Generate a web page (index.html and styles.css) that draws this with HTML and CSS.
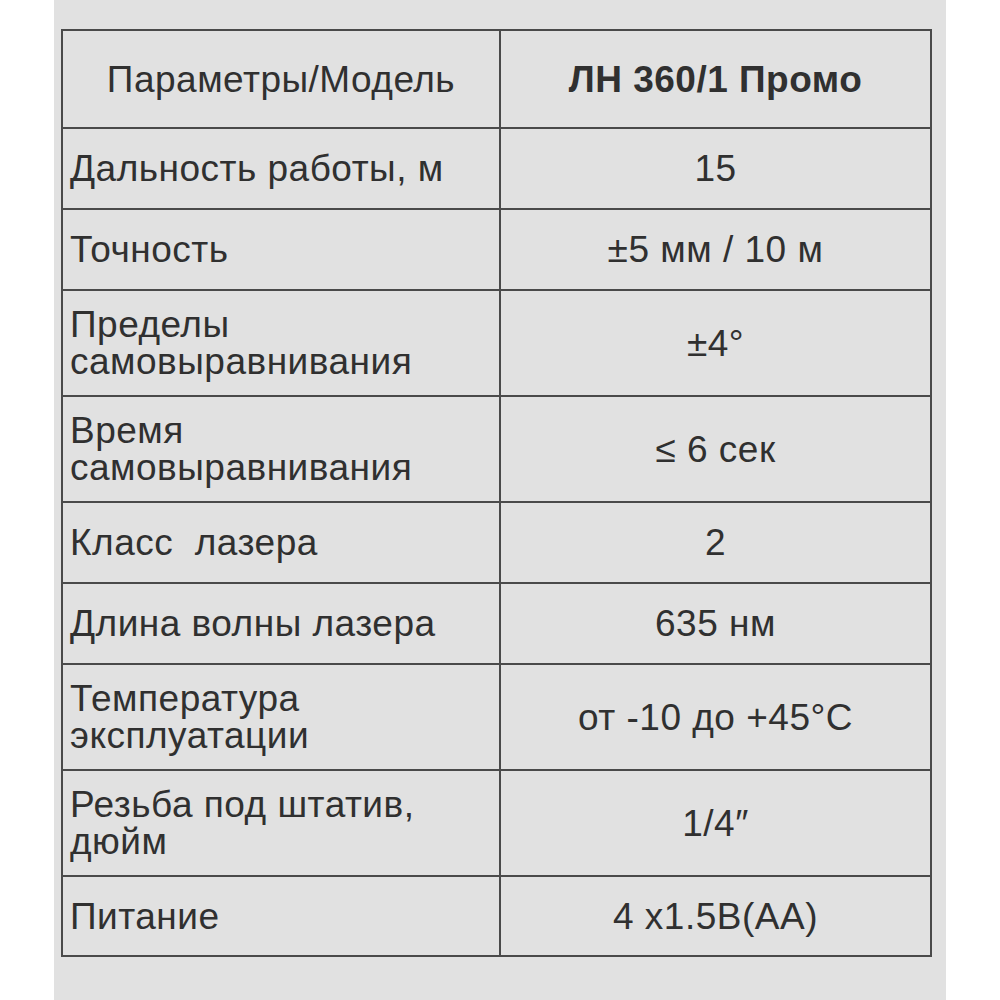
FILE: index.html
```html
<!DOCTYPE html>
<html lang="ru">
<head>
<meta charset="utf-8">
<link rel="stylesheet" href="styles.css">
</head>
<body>
<div class="sheet">
  <table class="spec">
    <tr class="r-head">
      <td class="c-head">Параметры/Модель</td>
      <td class="c-val c-model">ЛН 360/1 Промо</td>
    </tr>
    <tr class="r-single">
      <td class="c-name">Дальность работы, м</td>
      <td class="c-val">15</td>
    </tr>
    <tr class="r-single">
      <td class="c-name">Точность</td>
      <td class="c-val">±5 мм / 10 м</td>
    </tr>
    <tr class="r-double">
      <td class="c-name">Пределы<br>самовыравнивания</td>
      <td class="c-val">±4°</td>
    </tr>
    <tr class="r-double">
      <td class="c-name">Время<br>самовыравнивания</td>
      <td class="c-val">≤ 6 сек</td>
    </tr>
    <tr class="r-single">
      <td class="c-name">Класс&nbsp; лазера</td>
      <td class="c-val">2</td>
    </tr>
    <tr class="r-single">
      <td class="c-name">Длина волны лазера</td>
      <td class="c-val">635 нм</td>
    </tr>
    <tr class="r-double">
      <td class="c-name">Температура<br>эксплуатации</td>
      <td class="c-val">от -10 до +45°C</td>
    </tr>
    <tr class="r-double">
      <td class="c-name">Резьба под штатив,<br>дюйм</td>
      <td class="c-val">1/4″</td>
    </tr>
    <tr class="r-last">
      <td class="c-name">Питание</td>
      <td class="c-val">4 x1.5B(AA)</td>
    </tr>
  </table>
</div>
</body>
</html>
```

FILE: styles.css
```css
html, body {
  margin: 0;
  padding: 0;
  background: #ffffff;
}
.sheet {
  margin-left: 54px;
  width: 892px;
  height: 1000px;
  background: #e1e1e1;
  padding: 29px 0 0 7px;
  box-sizing: border-box;
  font-family: "Liberation Sans", Arial, sans-serif;
  color: #303030;
}
.spec {
  border-collapse: collapse;
  width: 871px;
  table-layout: fixed;
}
.spec td {
  border: 2px solid #4a4a4a;
  font-size: 37px;
  line-height: 37px;
  letter-spacing: 0.5px;
  vertical-align: middle;
  padding: 0 0 0 7px;
  white-space: nowrap;
}
.spec td:first-child {
  width: 436px;
}
.spec .c-head {
  text-align: center;
  padding: 0;
}
.spec .c-val {
  text-align: center;
  padding: 0;
}
.spec .c-model {
  font-weight: bold;
}
.r-head { height: 98px; }
.r-single { height: 81px; }
.r-double { height: 106px; }
.r-last { height: 80px; }
```
